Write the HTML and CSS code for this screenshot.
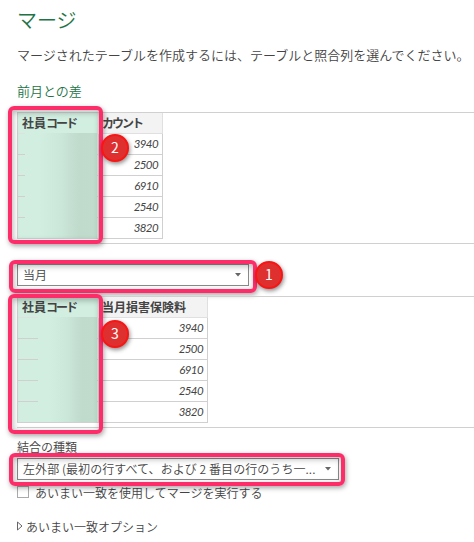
FILE: index.html
```html
<!DOCTYPE html>
<html lang="ja">
<head>
  <meta charset="UTF-8" />
  <meta name="viewport" content="width=device-width, initial-scale=1" />
  <title>マージ</title>
  <link rel="stylesheet" href="styles.css">
</head>
<body>

  <div class="dialog">
    <h1>マージ</h1>
    <p class="description">マージされたテーブルを作成するには、テーブルと照合列を選んでください。</p>

    <!-- First table -->
    <h2>前月との差</h2>
    <div class="preview">
      <table class="first">
        <tr><th class="selected">社員<span class="kana">コード</span></th><th><span class="kana">カウント</span></th></tr>
        <tr><td class="selected"></td><td>3940</td></tr>
        <tr><td class="selected"></td><td>2500</td></tr>
        <tr><td class="selected"></td><td>6910</td></tr>
        <tr><td class="selected"></td><td>2540</td></tr>
        <tr><td class="selected"></td><td>3820</td></tr>
      </table>
      <div class="mask"></div>
      <div class="marker"></div>
      <span class="badge">2</span>
    </div>

    <!-- Second table -->
    <div class="select table-select">
      <span>当月</span>
      <svg class="caret" width="6" height="4" viewBox="0 0 6 4"><path d="M0 0h6L3 3.5z" fill="#666" /></svg>
      <div class="marker"></div>
      <span class="badge">1</span>
    </div>
    <div class="preview second-preview">
      <table class="second">
        <tr><th class="selected">社員<span class="kana">コード</span></th><th>当月損害保険料</th></tr>
        <tr><td class="selected"></td><td>3940</td></tr>
        <tr><td class="selected"></td><td>2500</td></tr>
        <tr><td class="selected"></td><td>6910</td></tr>
        <tr><td class="selected"></td><td>2540</td></tr>
        <tr><td class="selected"></td><td>3820</td></tr>
      </table>
      <div class="mask"></div>
      <div class="marker"></div>
      <span class="badge">3</span>
    </div>

    <!-- Join options -->
    <div class="label">結合の種類</div>
    <div class="select join-select">
      <span class="join-text">左外部 (最初の行すべて、および 2 番目の行のうち一...</span>
      <svg class="caret" width="6" height="4" viewBox="0 0 6 4"><path d="M0 0h6L3 3.5z" fill="#666" /></svg>
      <div class="marker"></div>
    </div>
    <div class="check-row">
      <span class="checkbox"></span>
      <span>あいまい一致を使用してマージを実行する</span>
    </div>
    <div class="expander">
      <svg width="6" height="10" viewBox="0 0 6 10"><path d="M.5 1v8L5 5z" fill="none" stroke="#666" /></svg>
      <span>あいまい一致オプション</span>
    </div>
  </div>

</body>
</html>
```
FILE: styles.css
```css
* {
  box-sizing: border-box;
}

body {
  margin: 0;
  background: #fff;
  color: #444;
  font-family: "Noto Sans CJK JP", sans-serif;
  font-size: 12px;
  font-weight: 350;
  overflow: hidden;
}

.dialog {
  padding: 5px 0 0 17px;
  white-space: nowrap;
}

h1 {
  margin: 0;
  color: #217346;
  font-size: 20px;
  font-weight: 350;
  line-height: 30px;
}

.description {
  margin: 10px 0 0;
  font-size: 13px;
  line-height: 20px;
}

h2 {
  margin: 16px 0 0;
  color: #217346;
  font-size: 13px;
  font-weight: 350;
  line-height: 20px;
}

/* Table previews */
.preview {
  position: relative;
  height: 132px;
  margin-top: 11px;
  border-top: 1px solid #d0d0d0;
  border-bottom: 1px solid #d0d0d0;
}

table {
  border-collapse: separate;
  border-spacing: 0;
  table-layout: fixed;
  border-left: 1px solid #d0d0d0;
}

.first {
  width: 146px;
}

.second {
  width: 191px;
}

th,
td {
  height: 21px;
  padding: 0 4px 0 3px;
  border-right: 1px solid #d0d0d0;
  border-bottom: 1px solid #d0d0d0;
  line-height: 18px;
}

th {
  background: #f3f3f3;
  font-size: 12px;
  font-weight: 700;
  text-align: left;
  border-color: #e0e0e0;
}

th.selected {
  width: 81px;
  padding-left: 4px;
}

td {
  font-family: Lato, sans-serif;
  font-size: 11.5px;
  font-style: italic;
  font-weight: 400;
  letter-spacing: -0.6px;
  text-align: right;
}

.selected {
  background: #d1eee0;
}

.kana {
  letter-spacing: -2px;
}

/* Blurred column values */
.mask {
  position: absolute;
  left: 8px;
  top: 20px;
  width: 72px;
  height: 105px;
  background: linear-gradient(90deg, #d1eee0 20%, #cbe7d9 50%, #c0dacc 75%, #c1dccd);
}

.second-preview .mask {
  left: 21px;
  width: 59px;
}

/* Pink frames and numbered badges */
.marker {
  position: absolute;
  left: -9px;
  top: -7px;
  width: 95px;
  height: 138px;
  border: 4px solid #fc2d68;
  border-radius: 6px;
  box-shadow: 1px 2px 5px rgba(0,0,0,0.35), inset 1px 2px 6px rgba(0,0,0,0.3);
}

.badge {
  position: absolute;
  left: 84px;
  top: 21px;
  width: 28px;
  height: 28px;
  border: 2px solid #fa1515;
  border-radius: 50%;
  background: #df3030;
  box-shadow: 1px 2px 4px rgba(0,0,0,0.45);
  color: #fff;
  font-family: "Noto Sans CJK JP", sans-serif;
  font-size: 14px;
  font-weight: 400;
  line-height: 22px;
  text-align: center;
}

/* Dropdowns */
.select {
  position: relative;
  display: flex;
  align-items: center;
  justify-content: space-between;
  height: 22px;
  padding: 0 7px 0 5px;
  border: 1px solid #8a8a8a;
  background: #fff;
  line-height: 18px;
}

.table-select {
  width: 232px;
  margin-top: 20px;
}

.table-select .marker {
  top: -5px;
  width: 248px;
  height: 33px;
}

.table-select .badge {
  left: 237px;
  top: -4px;
}

.second-preview {
  margin-top: 10px;
}

.second-preview .marker {
  top: -3px;
  height: 140px;
}

.second-preview .badge {
  top: 23px;
}

.label {
  margin-top: 10px;
  line-height: 18px;
}

.join-select {
  width: 322px;
  margin-top: 2px;
}

.join-select .marker {
  top: -6px;
  width: 336px;
  height: 33px;
}

.join-text {
  letter-spacing: 0.07px;
}

.check-row {
  display: flex;
  align-items: center;
  gap: 6px;
  height: 18px;
  margin-top: 3px;
}

.checkbox {
  width: 12px;
  height: 12px;
  border: 1px solid #aaa;
}

.expander {
  display: flex;
  align-items: center;
  gap: 3px;
  height: 18px;
  margin-top: 16px;
}
```
